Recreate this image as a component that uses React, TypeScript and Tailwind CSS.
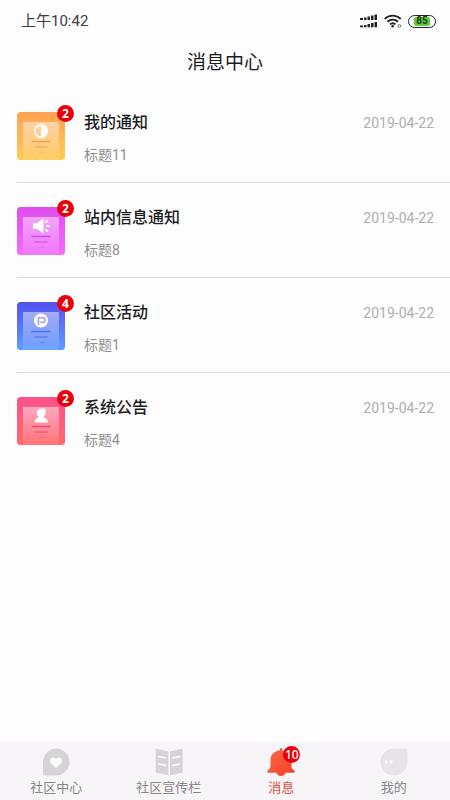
import { useState } from 'react'

type Kind = 'notice' | 'station' | 'activity' | 'system'

interface Message {
  kind: Kind
  title: string
  subtitle: string
  date: string
  unread: number
}

const messages: Message[] = [
  { kind: 'notice', title: '我的通知', subtitle: '标题11', date: '2019-04-22', unread: 2 },
  { kind: 'station', title: '站内信息通知', subtitle: '标题8', date: '2019-04-22', unread: 2 },
  { kind: 'activity', title: '社区活动', subtitle: '标题1', date: '2019-04-22', unread: 4 },
  { kind: 'system', title: '系统公告', subtitle: '标题4', date: '2019-04-22', unread: 2 },
]

// top and bottom of the tile gradient, then the colour of the text lines
const tileColors: Record<Kind, [string, string, string]> = {
  notice: ['#ffa354', '#ffcb57', '#f0a04c'],
  station: ['#e04df0', '#f26cfb', '#cf48e6'],
  activity: ['#5350ee', '#5f9dff', '#4a6fe6'],
  system: ['#fb528c', '#ff6a68', '#e8496f'],
}

const Glyph = ({ kind }: { kind: Kind }) => {
  if (kind === 'notice') {
    return (
      <>
        <circle cx="24" cy="19" r="6.2" fill="none" stroke="#fff" strokeWidth="1.6" />
        <path d="M24 13.500a5.500 5.500 0 0 1 0 11z" fill="#fff" />
      </>
    )
  }
  if (kind === 'station') {
    return (
      <>
        <path d="M16 16.300h4l6.500-5v15.400l-6.500-5h-4z" fill="#fff" />
        <path d="M28.200 15.800l2.800-2.400M29 19h3.800M28.200 22.200l2.800 2.400" stroke="#fff" strokeWidth="1.900" />
      </>
    )
  }
  if (kind === 'activity') {
    return (
      <>
        <circle cx="24" cy="18.500" r="7" fill="#fff" />
        <path
          d="M21.500 23v-7.200h4.300a2.300 2.300 0 0 1 0 4.600h-2.600"
          fill="none"
          stroke="#a3a0ef"
          strokeWidth="1.600"
        />
      </>
    )
  }
  return (
    <path
      d="M24.200 11.500h4.300v5.100a4.600 4.600 0 0 1-2.300 3.600c2.600.5 4.800 2.200 4.800 5.300H17.500c0-3.100 2.200-4.800 4.800-5.300a4.600 4.600 0 0 1 1.900-8.700z"
      fill="#fff"
    />
  )
}

const Tile = ({ kind }: { kind: Kind }) => {
  const [from, to, line] = tileColors[kind]
  return (
    <svg viewBox="0 0 48 48" className="size-12" aria-hidden="true">
      <defs>
        <linearGradient id={`tile-${kind}`} x1="0" y1="0" x2="0" y2="1">
          <stop offset="0" stopColor={from} />
          <stop offset="1" stopColor={to} />
        </linearGradient>
        <linearGradient id={`sheet-${kind}`} x1="0" y1="0" x2="0" y2="1">
          <stop offset="0" stopColor="#fff" stopOpacity="0.48" />
          <stop offset="1" stopColor="#fff" stopOpacity="0.08" />
        </linearGradient>
      </defs>
      <rect width="48" height="48" rx="3.5" fill={`url(#tile-${kind})`} />
      <rect x="6" y="10" width="36" height="38" fill={`url(#sheet-${kind})`} />
      <Glyph kind={kind} />
      <g stroke={line} strokeWidth="1.4">
        <path d="M14.500 29.500h19" />
        <path d="M17.500 35h13" opacity="0.7" />
        <path d="M21.500 40.500h6" opacity="0.3" />
      </g>
    </svg>
  )
}

const StatusBar = () => (
  <div className="flex h-[42px] items-center justify-between pr-[14px] pl-[21px]">
    <span className="text-[15px] text-[#3c3c3e]">上午10:42</span>
    <div className="flex items-center gap-[6px]">
      <svg viewBox="0 0 18 14" className="h-[14px] w-[18px]" fill="#222" aria-hidden="true">
        <path d="M0 4h3v2H0zM4 3.500h2.500V6H4zM7.500 2.500H10V6H7.500zM11 1.500h2.500V6H11zM14.500.5H17V6h-2.500z" />
        <path d="M0 11.500h3v1.800H0zM4 11h2.500v2.300H4zM7.500 10H10v3.300H7.500zM11 9h2.500v4.300H11zM14.500 8H17v5.300h-2.500z" />
      </svg>
      <svg viewBox="0 0 18 14" className="h-[14px] w-[18px]" fill="none" stroke="#222" strokeWidth="1.9" aria-hidden="true">
        <path d="M.7 4.900a11.400 11.400 0 0 1 16 0M3.400 7.800a7.600 7.600 0 0 1 10.600 0M6 10.400a4 4 0 0 1 5.400 0" />
        <circle cx="8.700" cy="12.300" r="1.300" fill="#222" stroke="none" />
        <circle cx="15.300" cy="11.900" r="1.400" stroke="#666" strokeWidth="0.9" />
      </svg>
      <div className="flex h-[13px] w-7 rounded-full border border-[#222] p-px">
        <span className="mx-1 flex flex-1 items-center justify-center rounded-xs bg-[#62cb3c] text-[10px] leading-none font-bold text-[#174012]">
          85
        </span>
      </div>
    </div>
  </div>
)

const MessageRow = ({ message }: { message: Message }) => (
  <li className="border-b border-[#dcdcde] last:border-b-0">
    <a href="#" className="flex pt-6 pr-4 pb-[17px]">
      <div className="relative size-12 shrink-0">
        <Tile kind={message.kind} />
        <span className="absolute -top-[7px] -right-[9px] flex size-[17px] items-center justify-center rounded-full bg-[#e8000b] font-['Noto_Sans'] text-[12px] leading-none font-bold text-white">
          {message.unread}
        </span>
      </div>
      <div className="ml-[19px] flex-1">
        <h2 className="text-[16px] leading-[22px] font-medium text-[#1c1c1e]">{message.title}</h2>
        <p className="mt-[11px] text-[14px] leading-5 text-[#8e8e90]">{message.subtitle}</p>
      </div>
      <time dateTime={message.date} className="text-[14px] leading-[22px] text-[#aeaeb0]">
        {message.date}
      </time>
    </a>
  </li>
)

const HeartIcon = () => (
  <svg viewBox="0 0 28 28" className="size-7" aria-hidden="true">
    <path d="M14 .5a13.500 13.500 0 1 1 0 27H2.800A1.800 1.800 0 0 1 1 25.500V14A13.500 13.500 0 0 1 14 .5z" fill="#d5d3d6" />
    <path
      d="M14 20.500l-5.100-5.300c-1.600-1.700-1.200-4.200.4-5.200 1.700-1 3.700-.4 4.700 1.200 1-1.600 3-2.200 4.700-1.200 1.600 1 2 3.500.4 5.200z"
      fill="#faf8fb"
    />
  </svg>
)

const BookIcon = () => (
  <svg viewBox="0 0 28 28" className="size-7" aria-hidden="true">
    <path
      d="M1.500.8L13.400 3.600v23.600L1.500 24.700a1 1 0 0 1-.8-1V1.500a.7.7 0 0 1 .8-.7zM26.900.8L15 3.600v23.600l11.900-2.500a1 1 0 0 0 .8-1V1.500a.7.7 0 0 0-.8-.7z"
      fill="#d5d3d6"
    />
    <path
      d="M4 8.700l6.500 1.200M4 16.200l6.500 1.200M24.400 8.700l-6.500 1.200M24.400 16.200l-6.500 1.200"
      stroke="#faf8fb"
      strokeWidth="1.800"
      strokeLinecap="round"
    />
  </svg>
)

const BellIcon = () => (
  <svg viewBox="0 0 28 28" className="size-7" aria-hidden="true">
    <defs>
      <linearGradient id="bell" x1="0" y1="0" x2="1" y2="1">
        <stop offset="0" stopColor="#fb6a45" />
        <stop offset="1" stopColor="#f43f26" />
      </linearGradient>
    </defs>
    <path
      d="M12.800 1.200a1.200 1.200 0 0 1 2.400 0v1.300c5.500.5 9.300 4.300 9.300 9v6.800c0 2 .8 3 2.500 3.900 1.200.7.900 2.500-.5 2.500h-8c-.7 2.200-2.300 3.300-4.500 3.300s-3.800-1.100-4.500-3.300h-8c-1.400 0-1.700-1.800-.5-2.500 1.700-.9 2.500-1.900 2.500-3.900v-6.800c0-4.700 3.800-8.500 9.300-9z"
      fill="url(#bell)"
    />
  </svg>
)

const MineIcon = () => (
  <svg viewBox="0 0 28 28" className="size-7" aria-hidden="true">
    <path d="M14 .5h11.500a2 2 0 0 1 2 2V14A13.500 13.500 0 1 1 14 .5z" fill="#e6e4e6" />
    <ellipse cx="6.300" cy="14" rx="1.300" ry="2" fill="#faf8fb" />
    <ellipse cx="11.300" cy="14" rx="1.300" ry="2" fill="#faf8fb" />
  </svg>
)

const tabs = [
  { label: '社区中心', Icon: HeartIcon, badge: 0 },
  { label: '社区宣传栏', Icon: BookIcon, badge: 0 },
  { label: '消息', Icon: BellIcon, badge: 10 },
  { label: '我的', Icon: MineIcon, badge: 0 },
]

const App: React.FC = () => {
  const [active, setActive] = useState<string>('消息')

  return (
    <div className="flex min-h-screen flex-col bg-[#fefdfe] font-[Roboto,'Noto_Sans_CJK_SC',sans-serif]">
      <StatusBar />
      <header className="flex h-[42px] items-center justify-center">
        <h1 className="text-[19px] leading-6 text-[#1c1c1e]">消息中心</h1>
      </header>

      <main className="flex-1 pt-1 pl-[17px]">
        <ul>
          {messages.map((message) => (
            <MessageRow key={message.kind} message={message} />
          ))}
        </ul>
      </main>

      <nav className="grid grid-cols-4 bg-[#f7f5f8]">
        {tabs.map(({ label, Icon, badge }) => (
          <button
            key={label}
            type="button"
            onClick={() => setActive(label)}
            className="flex flex-col items-center pt-[6px] pb-1"
          >
            <span className="relative">
              <Icon />
              {badge > 0 && (
                <span className="absolute -top-[2px] -right-[5px] flex size-[17px] items-center justify-center rounded-full bg-[#e8000b] font-['Noto_Sans'] text-[12px] leading-none font-medium text-white">
                  {badge}
                </span>
              )}
            </span>
            <span
              className={
                active === label
                  ? 'mt-1 text-[13px] leading-4 text-[#d9503c]'
                  : 'mt-1 text-[13px] leading-4 text-[#88868a]'
              }
            >
              {label}
            </span>
          </button>
        ))}
      </nav>
    </div>
  )
}

export default App
